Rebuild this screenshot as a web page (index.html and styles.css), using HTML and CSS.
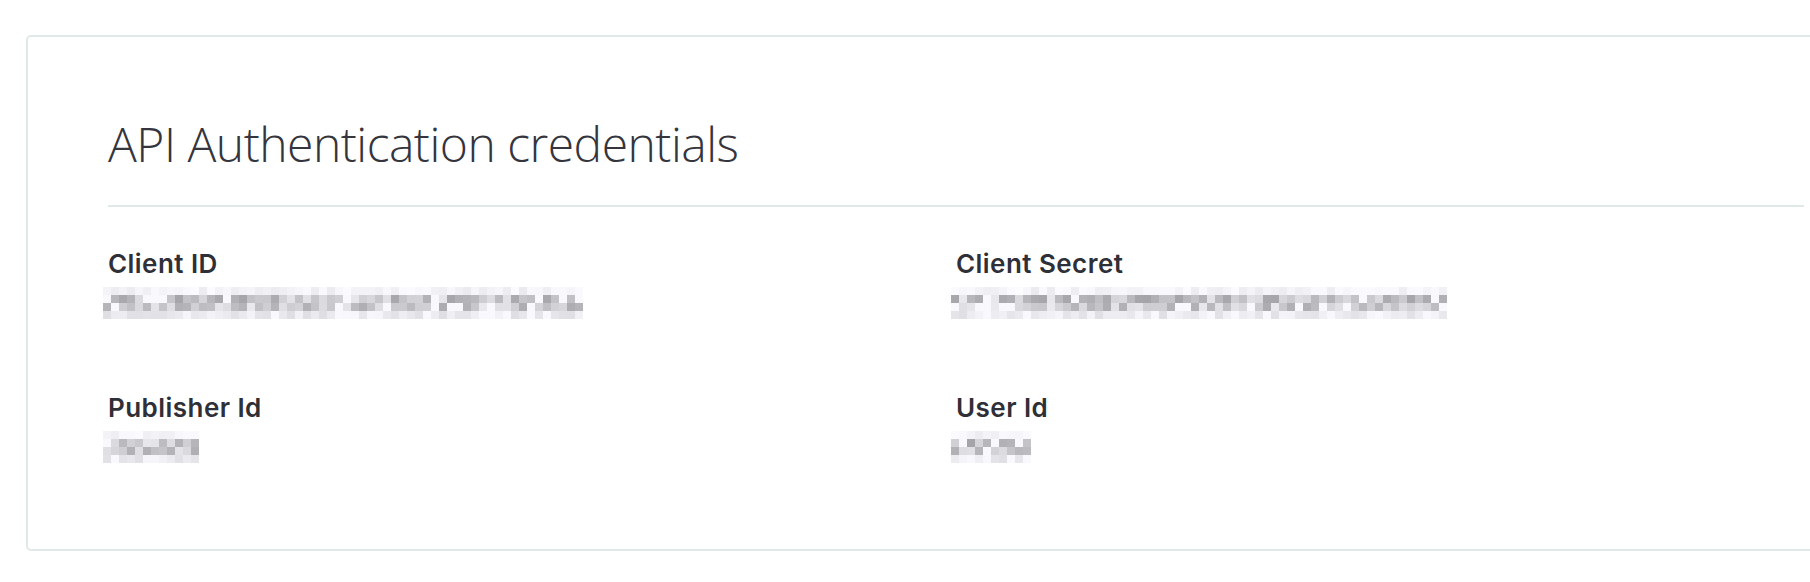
FILE: index.html
```html
<!DOCTYPE html>
<html lang="en">
<head>
    <meta charset="UTF-8">
    <title>API Authentication credentials</title>
    <link rel="stylesheet" href="styles.css">
</head>
<body>

<div class="panel">
    <h1 class="panel-title">API Authentication credentials</h1>

    <div class="creds">
        <div class="cred">
            <div class="cred-label">Client ID</div>
            <div class="mosaic" data-cols="60" data-seed="7"></div>
        </div>
        <div class="cred">
            <div class="cred-label">Client Secret</div>
            <div class="mosaic" data-cols="62" data-seed="19"></div>
        </div>
        <div class="cred">
            <div class="cred-label">Publisher Id</div>
            <div class="mosaic" data-cols="12" data-seed="31"></div>
        </div>
        <div class="cred">
            <div class="cred-label">User Id</div>
            <div class="mosaic" data-cols="10" data-seed="43"></div>
        </div>
    </div>
</div>

<script>
    // valores ocultos: se dibuja un pixelado gris en lugar del texto
    function rand(seed) {
        let s = seed;
        return function () {
            s = (s * 9301 + 49297) % 233280;
            return s / 233280;
        };
    }

    document.querySelectorAll(".mosaic").forEach(m => {
        const cols = parseInt(m.dataset.cols);
        const r = rand(parseInt(m.dataset.seed));
        const ranges = [[234, 252], [164, 232], [172, 234], [222, 248]];

        ranges.forEach(range => {
            const row = document.createElement("div");
            row.className = "mosaic-row";
            for (let i = 0; i < cols; i++) {
                const cell = document.createElement("span");
                let v = Math.round(range[0] + r() * (range[1] - range[0]));
                if (r() < 0.12) v = 248;
                const b = Math.min(255, v + 5);
                cell.style.background = "rgb(" + v + "," + v + "," + b + ")";
                row.appendChild(cell);
            }
            m.appendChild(row);
        });
    });
</script>

</body>
</html>
```

FILE: styles.css
```css
html, body {
    margin: 0;
    background: #fff;
    overflow: hidden;
}
.panel {
    box-sizing: border-box;
    width: 1860px;
    margin: 35px 0 0 26px;
    padding: 79px 80px 86px;
    border: 2px solid #e1e9e8;
    border-radius: 5px;
    background: #fff;
}
.panel-title {
    margin: 0;
    padding-bottom: 33px;
    border-bottom: 2px solid #e1e9e8;
    font-family: "Open Sans", sans-serif;
    font-weight: 300;
    font-size: 48px;
    line-height: 56px;
    letter-spacing: -0.5px;
    color: #35353d;
}
.creds {
    display: grid;
    grid-template-columns: 1fr 1fr;
    row-gap: 74px;
    margin-top: 42px;
}
.cred-label {
    font-family: Inter, "Liberation Sans", sans-serif;
    font-weight: 600;
    font-size: 26px;
    line-height: 30px;
    letter-spacing: 0.45px;
    color: #2f2f37;
}
.mosaic {
    display: flex;
    flex-direction: column;
    margin: 8px 0 0 -5px;
}
.mosaic-row {
    display: flex;
}
.mosaic-row span {
    width: 8px;
    height: 8px;
}
```
